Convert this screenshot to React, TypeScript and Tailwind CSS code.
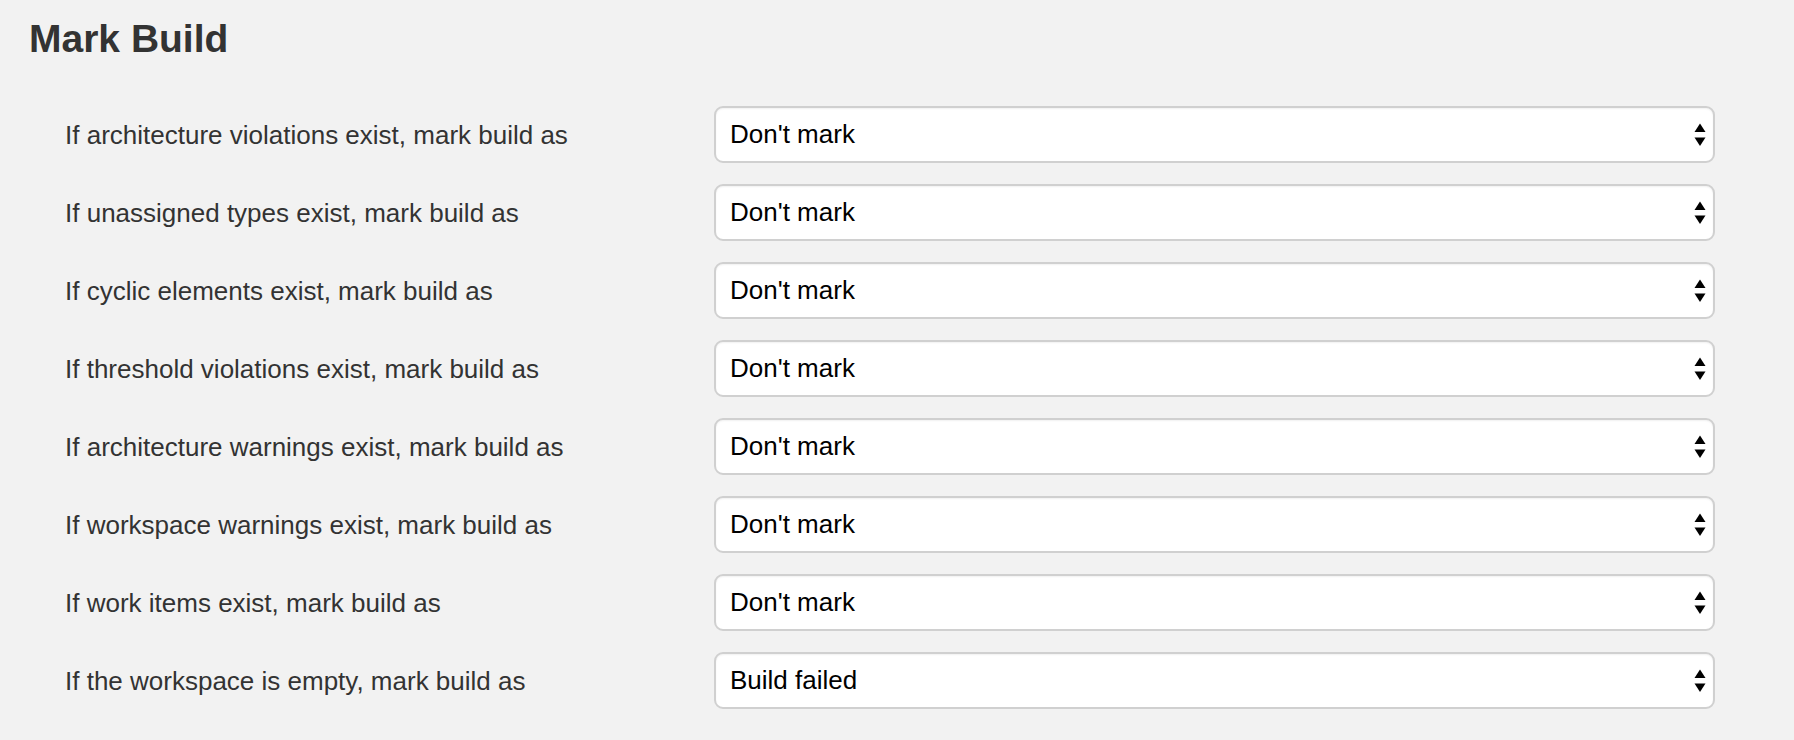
const rows = [
  { label: 'If architecture violations exist, mark build as', value: "Don't mark" },
  { label: 'If unassigned types exist, mark build as', value: "Don't mark" },
  { label: 'If cyclic elements exist, mark build as', value: "Don't mark" },
  { label: 'If threshold violations exist, mark build as', value: "Don't mark" },
  { label: 'If architecture warnings exist, mark build as', value: "Don't mark" },
  { label: 'If workspace warnings exist, mark build as', value: "Don't mark" },
  { label: 'If work items exist, mark build as', value: "Don't mark" },
  { label: 'If the workspace is empty, mark build as', value: 'Build failed' },
];

function SelectArrows() {
  return (
    <svg width="12" height="24" viewBox="0 0 12 24" className="shrink-0">
      <path d="M0.5 9 L6 0.5 L11.5 9 Z" fill="#000" />
      <path d="M0.5 14.5 L6 23 L11.5 14.5 Z" fill="#000" />
    </svg>
  );
}

function FakeSelect({ value }: { value: string }) {
  return (
    <div className="flex h-[57px] flex-1 items-center justify-between rounded-[9px] border-2 border-[#d0d0d0] bg-white pl-[14px] pr-[7px] shadow-[inset_0_1px_2px_rgba(0,0,0,0.06)]">
      <span className="-mt-[2px] text-[26px] leading-none text-black">{value}</span>
      <SelectArrows />
    </div>
  );
}

export default function App() {
  return (
    <div className="min-h-[740px] w-full bg-[#f2f2f2] font-['Liberation_Sans',Helvetica,Arial,sans-serif] text-[#333]">
      <h1 className="pl-[29px] pt-[17px] text-[39px] font-bold leading-[44px] text-[#333]">Mark Build</h1>

      <div className="mt-[45px] flex flex-col gap-[21px] pl-[65px] pr-[79px]">
        {rows.map((row) => (
          <div key={row.label} className="flex items-center">
            <label className="w-[649px] shrink-0 text-[26px] leading-[30px] text-[#333]">{row.label}</label>
            <FakeSelect value={row.value} />
          </div>
        ))}
      </div>
    </div>
  );
}
